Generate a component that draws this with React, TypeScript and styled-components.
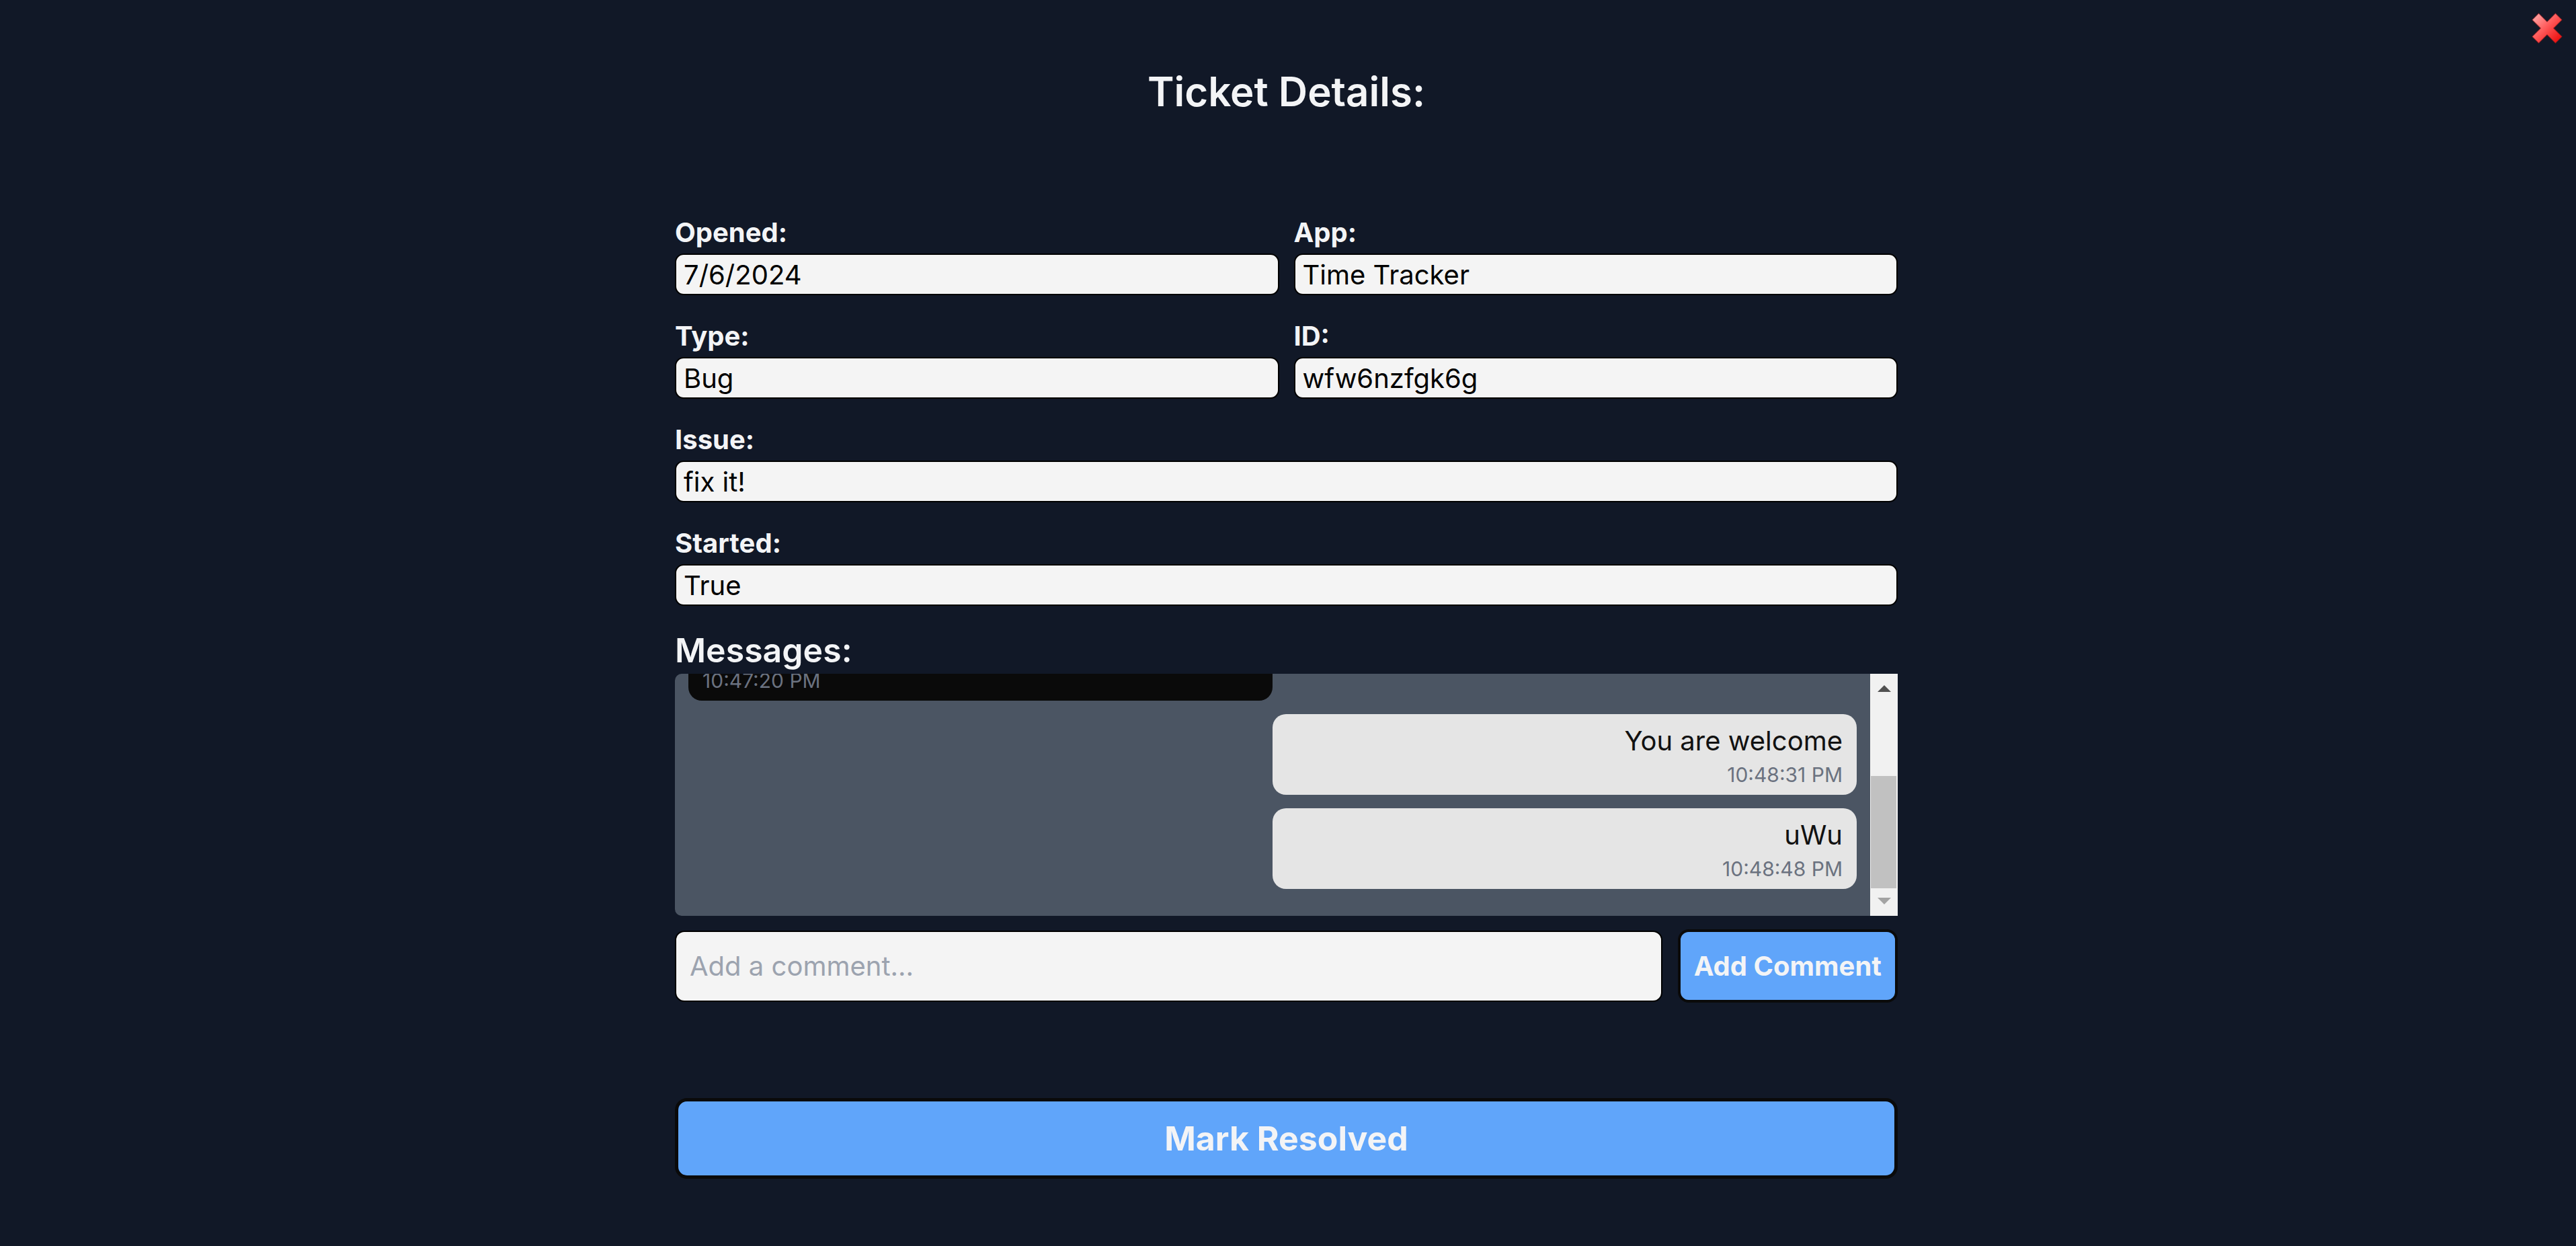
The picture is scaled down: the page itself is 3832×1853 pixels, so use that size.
import { useLayoutEffect, useRef, useState } from "react";
import styled, { createGlobalStyle } from "styled-components";

const GlobalStyle = createGlobalStyle`
  html, body {
    margin: 0;
    padding: 0;
    background: #111827;
  }
  * {
    box-sizing: border-box;
  }
  body {
    font-family: Inter, "Liberation Sans", sans-serif;
  }
`;

const Page = styled.div`
  position: relative;
  min-height: 100vh;
  padding: 98px 5px 0 0;
  background: #111827;
  color: #f3f4f6;
`;

const CloseButton = styled.button`
  position: absolute;
  top: 19px;
  right: 20px;
  width: 46px;
  height: 46px;
  padding: 0;
  border: none;
  background: transparent;
  cursor: pointer;
  svg {
    display: block;
  }
`;

const Title = styled.h1`
  margin: 0;
  text-align: center;
  font-size: 60px;
  line-height: 76px;
  font-weight: 600;
  color: #f3f4f6;
`;

const Container = styled.div`
  width: 1819px;
  margin: 149px auto 0;
`;

const FieldGrid = styled.div`
  display: grid;
  grid-template-columns: 1fr 1fr;
  column-gap: 22px;
  row-gap: 38px;
`;

const Field = styled.div<{ $wide?: boolean }>`
  display: flex;
  flex-direction: column;
  grid-column: ${(p) => (p.$wide ? "1 / -1" : "auto")};
`;

const Label = styled.label`
  font-size: 40px;
  line-height: 46px;
  font-weight: 700;
  color: #f3f4f6;
  margin-bottom: 8px;
`;

const ReadOnlyInput = styled.input`
  height: 62px;
  width: 100%;
  padding: 0 11px;
  border: 2px solid #000;
  border-radius: 13px;
  background: #f4f4f4;
  font-family: inherit;
  font-size: 40px;
  color: #000;
  outline: none;
`;

const SectionTitle = styled.h2`
  margin: 36px 0 5px;
  font-size: 50px;
  line-height: 60px;
  font-weight: 600;
  color: #f3f4f6;
`;

const MessagesPanel = styled.div`
  display: flex;
  height: 360px;
  background: #4b5563;
  border-radius: 10px 0 0 10px;
  overflow: hidden;
`;

const MessageList = styled.div`
  flex: 1;
  min-width: 0;
  overflow-y: auto;
  display: flex;
  flex-direction: column;
  gap: 20px;
  padding: 20px 20px 40px;
  scrollbar-width: none;
  &::-webkit-scrollbar {
    display: none;
  }
`;

const ScrollBar = styled.div`
  width: 41px;
  flex-shrink: 0;
  display: flex;
  flex-direction: column;
  background: #f1f1f1;
`;

const ArrowButton = styled.div<{ $dir: "up" | "down" }>`
  height: 41px;
  flex-shrink: 0;
  display: flex;
  justify-content: center;
  align-items: center;
  padding: ${(p) => (p.$dir === "up" ? "3px 0 0" : "0 0 3px")};
  &::before {
    content: "";
    width: 0;
    height: 0;
    border-left: 10px solid transparent;
    border-right: 10px solid transparent;
    ${(p) =>
      p.$dir === "up"
        ? "border-bottom: 10px solid #505050;"
        : "border-top: 10px solid #a3a3a3;"}
  }
`;

const Track = styled.div`
  flex: 1;
  display: flex;
  flex-direction: column;
`;

const Thumb = styled.div`
  margin: 0 2px 0 1px;
  background: #c1c1c1;
`;

const Bubble = styled.div<{ $mine: boolean }>`
  flex-shrink: 0;
  width: 50%;
  align-self: ${(p) => (p.$mine ? "flex-end" : "flex-start")};
  padding: 10px 21px;
  border-radius: 20px;
  background: ${(p) => (p.$mine ? "#e5e5e5" : "#0a0a0a")};
  color: ${(p) => (p.$mine ? "#111" : "#f3f4f6")};
  text-align: ${(p) => (p.$mine ? "right" : "left")};
`;

const BubbleText = styled.div`
  font-size: 40px;
  line-height: 60px;
`;

const BubbleTime = styled.div`
  font-size: 30px;
  line-height: 40px;
  color: #6b7280;
`;

const CommentRow = styled.div`
  display: flex;
  align-items: center;
  gap: 23px;
  margin-top: 20px;
`;

const CommentInput = styled.input`
  flex: 1;
  height: 106px;
  padding: 0 20px;
  border: 2px solid #000;
  border-radius: 14px;
  background: #f4f4f4;
  font-family: inherit;
  font-size: 40px;
  color: #000;
  outline: none;
  &::placeholder {
    color: #9ca3af;
  }
`;

const BlueButton = styled.button<{ $big?: boolean }>`
  height: ${(p) => (p.$big ? "120px" : "109px")};
  width: ${(p) => (p.$big ? "100%" : "auto")};
  padding: 0 20px;
  border: ${(p) => (p.$big ? "5px" : "4px")} solid #0a0a0a;
  border-radius: ${(p) => (p.$big ? "18px" : "16px")};
  background: #60a5fa;
  color: #f3f4f6;
  font-family: inherit;
  font-size: ${(p) => (p.$big ? "50px" : "40px")};
  font-weight: 700;
  cursor: pointer;
`;

const Footer = styled.div`
  display: flex;
  margin-top: 142px;
`;

const fields = [
  { label: "Opened:", value: "7/6/2024" },
  { label: "App:", value: "Time Tracker" },
  { label: "Type:", value: "Bug" },
  { label: "ID:", value: "wfw6nzfgk6g" },
  { label: "Issue:", value: "fix it!", wide: true },
  { label: "Started:", value: "True", wide: true },
];

const messages = [
  { text: "I'm on it", time: "10:46:55 PM", mine: true },
  { text: "Thank you!", time: "10:47:20 PM", mine: false },
  { text: "You are welcome", time: "10:48:31 PM", mine: true },
  { text: "uWu", time: "10:48:48 PM", mine: true },
];

const CloseIcon = () => (
  <svg width="46" height="46" viewBox="-1 -1 48 48">
    <defs>
      <linearGradient id="xGrad" x1="0" y1="0" x2="46" y2="46" gradientUnits="userSpaceOnUse">
        <stop offset="0" stopColor="#ffb3b3" />
        <stop offset="0.45" stopColor="#ff5c5c" />
        <stop offset="1" stopColor="#e80000" />
      </linearGradient>
    </defs>
    <polygon
      points="23,13 36,0 46,10 33,23 46,36 36,46 23,33 10,46 0,36 13,23 0,10 10,0"
      fill="url(#xGrad)"
      stroke="#9b1c1c"
      strokeOpacity="0.55"
      strokeWidth="1.2"
      strokeLinejoin="round"
    />
  </svg>
);

const TRACK = 360 - 2 * 41;

export default function App() {
  const listRef = useRef<HTMLDivElement>(null);
  const [thumb, setThumb] = useState({ top: 111, height: 167 });

  useLayoutEffect(() => {
    const el = listRef.current;
    if (!el) return;
    el.scrollTop = el.scrollHeight;
    const height = (TRACK * el.clientHeight) / el.scrollHeight;
    const top = (TRACK * el.scrollTop) / el.scrollHeight;
    setThumb({ top, height });
  }, []);

  return (
    <>
      <GlobalStyle />
      <Page>
        <CloseButton aria-label="Close">
          <CloseIcon />
        </CloseButton>
        <Title>Ticket Details:</Title>
        <Container>
          <FieldGrid>
            {fields.map((f) => (
              <Field key={f.label} $wide={f.wide}>
                <Label>{f.label}</Label>
                <ReadOnlyInput value={f.value} readOnly />
              </Field>
            ))}
          </FieldGrid>

          <SectionTitle>Messages:</SectionTitle>
          <MessagesPanel>
            <MessageList ref={listRef}>
              {messages.map((m, i) => (
                <Bubble key={i} $mine={m.mine}>
                  <BubbleText>{m.text}</BubbleText>
                  <BubbleTime>{m.time}</BubbleTime>
                </Bubble>
              ))}
            </MessageList>
            <ScrollBar>
              <ArrowButton $dir="up" />
              <Track>
                <Thumb style={{ marginTop: thumb.top, height: thumb.height }} />
              </Track>
              <ArrowButton $dir="down" />
            </ScrollBar>
          </MessagesPanel>

          <CommentRow>
            <CommentInput placeholder="Add a comment..." />
            <BlueButton>Add Comment</BlueButton>
          </CommentRow>

          <Footer>
            <BlueButton $big>Mark Resolved</BlueButton>
          </Footer>
        </Container>
      </Page>
    </>
  );
}
